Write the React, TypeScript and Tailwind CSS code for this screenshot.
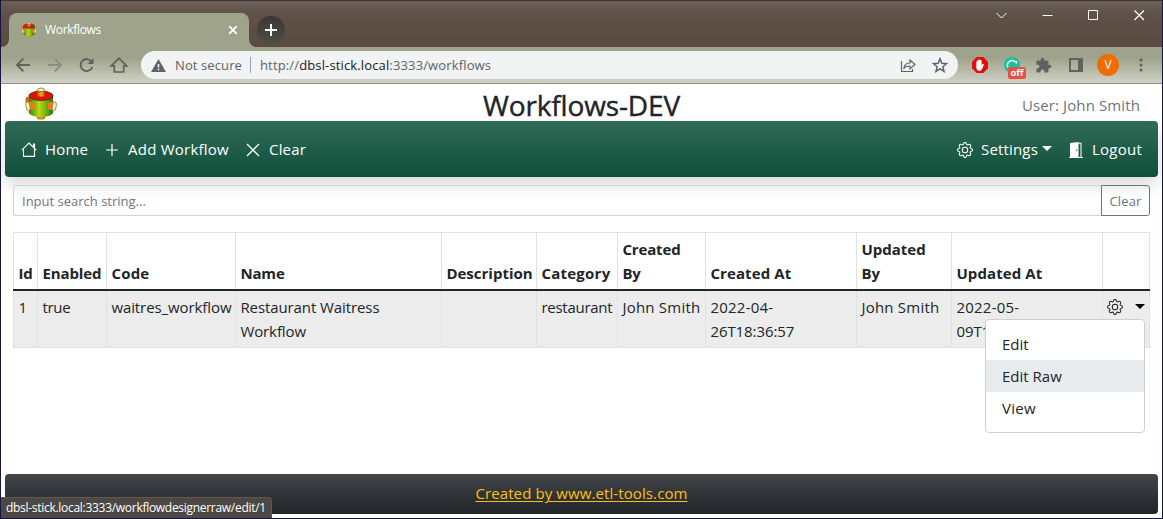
import type { ReactNode } from "react";
import { BsGear } from "react-icons/bs";
import { MdExtension } from "react-icons/md";

function HubLogo({ className }: { className: string }) {
  return (
    <svg className={className} viewBox="0 0 32 34">
      <defs>
        <linearGradient id="drum" x1="0" x2="1">
          <stop offset="0" stopColor="#2f8512" />
          <stop offset=".2" stopColor="#6ab00c" />
          <stop offset=".42" stopColor="#c3d610" />
          <stop offset=".75" stopColor="#5fae10" />
          <stop offset="1" stopColor="#267010" />
        </linearGradient>
        <linearGradient id="pipe" x1="0" x2="1">
          <stop offset="0" stopColor="#d0600a" />
          <stop offset=".5" stopColor="#f0a020" />
          <stop offset="1" stopColor="#c8620c" />
        </linearGradient>
      </defs>
      <path d="M12 27h8v4.500q-4 2.600-8 0z" fill="url(#pipe)" />
      <ellipse cx="3" cy="13.500" rx="2.600" ry="4" fill="#cf6f14" />
      <path d="M4 8.500V25.500c0 2.500 5.500 4.500 12 4.500S28 28 28 25.500V8.500z" fill="url(#drum)" />
      <ellipse cx="16" cy="8.800" rx="12" ry="4.700" fill="#dc1408" stroke="#5a1a08" strokeWidth=".8" />
      <path d="M12.500 3.200h7V8.600c-1 1.600-6 1.600-7 0z" fill="url(#pipe)" />
      <ellipse cx="16" cy="2.800" rx="3.700" ry="1.700" fill="#fff0b0" stroke="#8a6a3a" strokeWidth=".8" />
      <path d="M3.500 14.800l6 .5v7l-6 1.300z" fill="#ea7d18" />
      <ellipse cx="3" cy="19.300" rx="2" ry="4.600" fill="#fff3c4" stroke="#926a38" strokeWidth=".8" transform="rotate(-8 3 19.300)" />
      <path d="M23 15.300l6.500-.5v8.800l-6.500-1.300z" fill="#ea7d18" />
      <ellipse cx="29.200" cy="19.300" rx="2" ry="4.600" fill="#fff3c4" stroke="#926a38" strokeWidth=".8" transform="rotate(8 29.200 19.300)" />
    </svg>
  );
}

function Caret({ className }: { className: string }) {
  return (
    <svg className={className} width="10" height="5" viewBox="0 0 10 5" fill="currentColor">
      <path d="M0 0h10L5 5z" />
    </svg>
  );
}

function TabStrip() {
  return (
    <div className="flex h-[47px] items-end border-t border-[#3a3635] bg-linear-to-b from-[#6b5f56] via-[#5f5148] via-30% to-[#594b42] text-white">
      <svg className="w-2 shrink-0" height="8" viewBox="0 0 8 8">
        <path d="M8 0v8H0c4 0 8-3 8-8z" fill="#9fa38b" />
      </svg>
      <div className="flex h-[34px] w-60 items-center rounded-t-lg bg-[#9fa38b] pr-[10px] pl-3">
        <HubLogo className="h-4 w-4" />
        <span className="ml-2 text-[12px] tracking-[-0.31px]">Workflows</span>
        <svg className="ml-auto" width="12" height="12" viewBox="0 0 12 12" stroke="#fff" strokeWidth="1.700">
          <path d="M2.200 2.200l7.600 7.600M9.800 2.200l-7.600 7.600" />
        </svg>
      </div>
      <svg className="w-2 shrink-0" height="8" viewBox="0 0 8 8">
        <path d="M0 0v8h8C4 8 0 5 0 0z" fill="#9fa38b" />
      </svg>
      <div className="mb-[3px] flex h-7 w-7 items-center justify-center rounded-full bg-linear-to-b from-[#3b3833] to-[#4d4c47]">
        <svg width="12" height="12" viewBox="0 0 12 12" stroke="#fff" strokeWidth="2">
          <path d="M6 0v12M0 6h12" />
        </svg>
      </div>
      <svg className="mr-4 mb-[26px] ml-auto" width="150" height="11" viewBox="0 0 150 11" fill="none" stroke="#fff">
        <path d="M.5 3l5 5 5-5" />
        <path d="M46.500 5.500h10" />
        <path d="M92.500.5h9v9h-9z" />
        <path d="M138.500.5l9.500 9.500M148 .5L138.500 10" strokeWidth="1.200" />
      </svg>
    </div>
  );
}

function AddressBar() {
  return (
    <div className="flex h-[37px] items-center border-b border-[#8f917f] bg-linear-to-b from-[#9fa38b] via-[#9fa38b] via-30% to-[#d0d2c6]">
      <svg className="ml-[13px] shrink-0" width="118" height="20" viewBox="0 0 118 20" fill="none" stroke="#5f6358" strokeWidth="1.900">
        <path d="M16 10H3M9.300 3.700L3 10l6.300 6.300" />
        <path d="M34 10h13M40.700 3.700L47 10l-6.300 6.300" stroke="#8b8e80" />
        <path d="M78.300 12a6 6 0 1 1-.7-5.300" />
        <path d="M79.500 3v6h-6z" fill="#5f6358" stroke="none" />
        <path d="M97.300 10.800l7.700-7.500 7.700 7.500h-3v6.200h-9.400v-6.200z" strokeWidth="1.700" />
      </svg>
      <div className="ml-[9px] flex h-7 w-[817px] items-center rounded-full bg-[#f1f3f4] text-[13px] text-[#5f6368]">
        <svg className="ml-[10px]" width="15" height="13" viewBox="0 0 15 13">
          <path d="M7.500 0L15 13H0z" fill="#5f6368" />
          <path d="M6.700 5h1.600v3.500H6.700zM6.700 9.700h1.600v1.600H6.700z" fill="#f1f3f4" />
        </svg>
        <span className="mt-px ml-[9px] w-[68px] tracking-[0.11px] whitespace-nowrap">Not secure</span>
        <span className="ml-[7px] h-4 w-px bg-[#9aa0a6]" />
        <span className="mt-px ml-[9px] tracking-[0.14px]">
          http://<span className="text-[#202124]">dbsl-stick.local</span>:3333/workflows
        </span>
        <svg className="mr-[9px] ml-auto" width="50" height="16" viewBox="0 0 50 16" fill="none" stroke="#5f6368" strokeWidth="1.200">
          <path d="M2.500 4v10.500h11V12" />
          <path d="M5 11c.5-3.500 2.500-5 6-5V3l5 4.500-5 4.300V9c-2.700 0-4.500.4-6 2z" />
          <path d="M41 1.800l1.800 4.500 4.700.4-3.600 3.100 1.100 4.600-4-2.500-4 2.500 1.100-4.600-3.600-3.100 4.700-.4z" strokeWidth="1.500" />
        </svg>
      </div>
      <svg className="ml-[14px]" width="16" height="16" viewBox="0 0 16 16">
        <path d="M4.700 0h6.600L16 4.700v6.600L11.300 16H4.700L0 11.300V4.700z" fill="#e40d0d" />
        <path d="M4.300 8V4.600q.6-.8 1.300 0V3.200q.6-.8 1.300 0v-.5q.7-.8 1.400 0v.6q.6-.8 1.300 0v5l1-1.300q1-.5 1.400.4l-1.900 4.500Q9.400 13.800 7.300 13.800 4.300 13.500 4.300 10.500z" fill="#fff" />
      </svg>
      <div className="relative ml-4 h-4 w-4">
        <svg width="16" height="16" viewBox="0 0 16 16" fill="none">
          <circle cx="8" cy="8" r="8" fill="#15c39a" />
          <path d="M11.500 5A4.700 4.700 0 0 0 4 10.500M12.300 4v2.500" stroke="#fff" strokeWidth="1.400" />
        </svg>
        <span className="absolute top-[10px] left-1 flex h-3 w-[18px] items-center justify-center rounded-xs bg-[#ea4f45] text-[9.5px] font-bold text-white">
          off
        </span>
      </div>
      <MdExtension className="ml-[15px] h-[17px] w-[17px] text-[#5f6360]" />
      <svg className="ml-[17px]" width="14" height="14" viewBox="0 0 14 14" fill="#5f6360">
        <path d="M0 0h14v14H0zM2 2v10h7V2z" fillRule="evenodd" />
      </svg>
      <div className="ml-[14px] flex h-[22px] w-[22px] items-center justify-center rounded-full bg-[#ef6c00] text-[12px] text-white">V</div>
      <svg className="ml-5" width="4" height="14" viewBox="0 0 4 14" fill="#5f6360">
        <circle cx="2" cy="2" r="1.600" />
        <circle cx="2" cy="7" r="1.600" />
        <circle cx="2" cy="12" r="1.600" />
      </svg>
    </div>
  );
}

function PageHeader() {
  return (
    <header className="grid h-[37px] grid-cols-3 items-start">
      <HubLogo className="mt-[3px] ml-6 h-[34px] w-8" />
      <h1 className="text-center text-[28px] leading-[43px] font-medium tracking-[-0.14px] [-webkit-text-stroke:0.4px_#212529]">
        Workflows-DEV
      </h1>
      <span className="mr-[22px] text-right leading-[43px] tracking-[0.11px] text-[#6c757d]">User: John Smith</span>
    </header>
  );
}

function NavBar() {
  return (
    <nav className="mx-1 flex h-14 items-center rounded bg-linear-to-b from-[#306b58] to-[#0e4f3a] pt-px text-white shadow-[0_8px_16px_rgba(0,0,0,0.15)]">
      <svg className="ml-4" width="16" height="16" viewBox="0 0 16 16" fill="none" stroke="#fff" strokeWidth="1.100">
        <path d="M.7 8.200L8 1l7.300 7.200M2.500 7v7.400h11V7M12.500 5.500V2h1v4.500" />
      </svg>
      <span className="ml-2 w-[43px] tracking-[0.15px]">Home</span>
      <svg className="ml-[17px]" width="14" height="14" viewBox="0 0 14 14" stroke="#fff" strokeWidth="1.200">
        <path d="M7 1v12M1 7h12" />
      </svg>
      <span className="ml-[9px] w-[102px] tracking-[0.24px] whitespace-nowrap">Add Workflow</span>
      <svg className="ml-4" width="14" height="14" viewBox="0 0 14 14" stroke="#fff" strokeWidth="1.300">
        <path d="M1 1l12 12M13 1L1 13" />
      </svg>
      <span className="ml-[9px] tracking-[0.18px]">Clear</span>
      <BsGear className="ml-auto h-4 w-4" />
      <span className="ml-2 w-[58px] tracking-[0.17px]">Settings</span>
      <Caret className="mr-[17px] mb-[3px] ml-[3px]" />
      <svg width="14" height="16" viewBox="0 0 14 16" fill="#fff">
        <path d="M1 15V1L9.500 0v.7H12.500V15H14v1H0v-1zM9.500 1.700V15h2V1.700zM7.300 7.500v1.800h1V7.500z" fillRule="evenodd" />
      </svg>
      <span className="mr-4 ml-[9px] w-[50px] tracking-[0.24px]">Logout</span>
    </nav>
  );
}

function Search() {
  return (
    <div className="mx-3 mt-2 flex h-[31px] text-[13px]">
      <input
        className="min-w-0 flex-1 rounded-l-[3px] border border-r-0 border-[#ced4da] px-2 pt-[3px] placeholder:text-[#6c757d]"
        placeholder="Input search string..."
      />
      <button className="w-[49px] rounded-r-[3px] border border-[#6c757d] pt-[3px] tracking-[0.14px] text-[#6c757d]">Clear</button>
    </div>
  );
}

const COLS = "grid grid-cols-[24px_69px_129px_206px_95px_81px_88px_151px_95px_151px_48px]";

function Cell({ children, className = "" }: { children?: ReactNode; className?: string }) {
  return (
    <div className={"border-l border-[#dee2e6] py-1 pl-[4.400px] whitespace-nowrap last:border-r " + className}>{children}</div>
  );
}

function WorkflowTable() {
  return (
    <div className="mx-3 mt-4 leading-6">
      <div className={COLS + " h-[59px] items-stretch border-t border-b-2 border-t-[#dee2e6] border-b-[#212529] font-bold"}>
        <Cell className="flex items-end">Id</Cell>
        <Cell className="flex items-end tracking-[-0.11px]">Enabled</Cell>
        <Cell className="flex items-end tracking-[0.2px]">Code</Cell>
        <Cell className="flex items-end tracking-[-0.15px]">Name</Cell>
        <Cell className="flex items-end">Description</Cell>
        <Cell className="flex items-end tracking-[0.24px]">Category</Cell>
        <Cell className="flex items-end tracking-[-0.15px]">Created<br />By</Cell>
        <Cell className="flex items-end tracking-[0.1px]">Created At</Cell>
        <Cell className="flex items-end">Updated<br />By</Cell>
        <Cell className="flex items-end tracking-[0.1px]">Updated At</Cell>
        <Cell />
      </div>
      <div className={COLS + " h-[57px] border-b border-[#dee2e6] bg-[#ececec]"}>
        <Cell>1</Cell>
        <Cell className="tracking-[-0.27px]">true</Cell>
        <Cell className="tracking-[-0.09px]">waitres_workflow</Cell>
        <Cell className="tracking-[-0.09px]">Restaurant Waitress<br />Workflow</Cell>
        <Cell />
        <Cell className="tracking-[-0.26px]">restaurant</Cell>
        <Cell className="tracking-[0.22px]">John Smith</Cell>
        <Cell className="tracking-[-0.07px]"><span className="tracking-[0.24px]">2022-04-</span><br />26T18:36:57</Cell>
        <Cell className="tracking-[0.22px]">John Smith</Cell>
        <Cell className="tracking-[-0.07px]"><span className="tracking-[0.24px]">2022-05-</span><br />09T1</Cell>
        <Cell className="relative">
          <div className="flex h-6 items-center">
            <BsGear className="h-4 w-4" />
            <Caret className="mb-[2px] ml-3 text-black" />
          </div>
          <div className="absolute top-7 right-1 h-[114px] w-40 rounded border border-[#cfcfcf] bg-white py-2">
            <div className="h-8 px-4 pt-1">Edit</div>
            <div className="h-8 bg-[#e9ecef] px-4 pt-1">Edit Raw</div>
            <div className="h-8 px-4 pt-1 tracking-[0.31px]">View</div>
          </div>
        </Cell>
      </div>
    </div>
  );
}

export default function App() {
  return (
    <div className="relative flex h-[519px] w-[1163px] flex-col overflow-hidden border-x border-b border-[#15153f] bg-white font-['Open_Sans',sans-serif] text-[15px] text-[#212529]">
      <TabStrip />
      <AddressBar />
      <PageHeader />
      <NavBar />
      <Search />
      <WorkflowTable />
      <footer className="mx-1 mt-auto mb-1 flex h-10 items-center justify-center rounded bg-linear-to-b from-[#424649] to-[#212529]">
        <a className="mb-px tracking-[0.1px] text-[#ffc107] underline underline-offset-2">Created by www.etl-tools.com</a>
      </footer>
      <div className="absolute bottom-0 left-0 h-[21px] w-[271px] rounded-tr border-t border-r border-[#5e5954] bg-[#4d4843] pl-[5px] text-[12px] leading-5 tracking-[-0.29px] whitespace-nowrap text-white">
        dbsl-stick.local:3333/workflowdesignerraw/edit/1
      </div>
    </div>
  );
}
